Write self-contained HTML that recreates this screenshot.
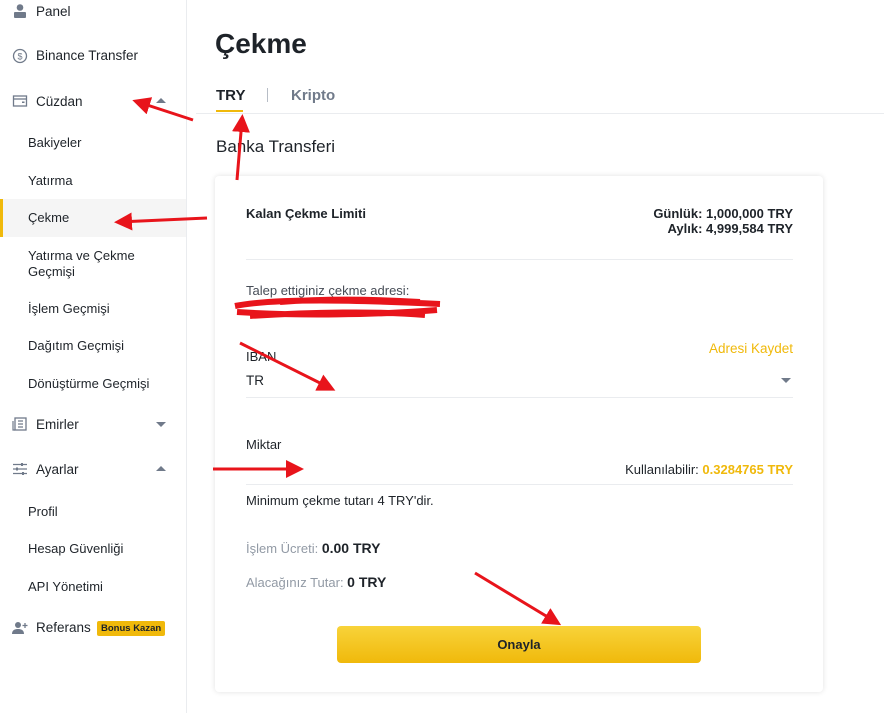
<!DOCTYPE html>
<html><head><meta charset="utf-8"><style>
*{margin:0;padding:0;box-sizing:border-box}
body{width:884px;height:713px;overflow:hidden;background:#fff;font-family:"Liberation Sans",sans-serif;color:#1e2329;position:relative}
.sb{position:absolute;left:0;top:0;width:187px;height:713px;border-right:1px solid #eaecef}
.it{position:absolute;left:0;width:186px;font-size:13.5px;color:#1e2329}
.it.top{left:36px}
.sub{position:absolute;left:28px;font-size:13px;color:#1e2329}
.ic{position:absolute;left:12px;width:16px;height:16px;color:#707a8a}
.car{position:absolute;left:156px;width:0;height:0;border-left:5px solid transparent;border-right:5px solid transparent}
.up{border-bottom:5px solid #707a8a}.dn{border-top:5px solid #707a8a}
.t{position:absolute;white-space:nowrap}
.card{position:absolute;left:215px;top:176px;width:608px;height:516px;border-radius:4px;box-shadow:0 0 6px rgba(0,0,0,.12);background:#fff}
.hr{position:absolute;height:1px;background:#eaecef}
</style></head><body>
<div class="sb">
<svg class="ic" style="top:3px" viewBox="0 0 16 16"><circle cx="8" cy="4.5" r="3.3" fill="#707a8a"/><rect x="2" y="9" width="12" height="6" rx="1" fill="#707a8a"/></svg>
<div class="t it top" style="top:4px">Panel</div>
<svg class="ic" style="top:48px" viewBox="0 0 16 16"><circle cx="8" cy="8" r="6.5" fill="none" stroke="#707a8a" stroke-width="1.3"/><text x="8" y="11.5" font-size="9" text-anchor="middle" fill="#707a8a" font-family="Liberation Sans">$</text></svg>
<div class="t it top" style="top:48px">Binance Transfer</div>
<svg class="ic" style="top:93px" viewBox="0 0 16 16"><rect x="1.5" y="3" width="13" height="10" fill="none" stroke="#707a8a" stroke-width="1.3"/><line x1="1.5" y1="6" x2="14.5" y2="6" stroke="#707a8a" stroke-width="1.3"/><rect x="10" y="8.5" width="2.5" height="1.5" fill="#707a8a"/></svg>
<div class="t it top" style="top:94px">Cüzdan</div><div class="car up" style="top:98px"></div>
<div class="t sub" style="top:135px">Bakiyeler</div>
<div class="t sub" style="top:173px">Yatırma</div>
<div style="position:absolute;left:0;top:199px;width:186px;height:38px;background:#f5f5f5;border-left:3px solid #f0b90b"></div>
<div class="t sub" style="top:210px">Çekme</div>
<div class="t sub" style="top:248px;line-height:16px">Yatırma ve Çekme<br>Geçmişi</div>
<div class="t sub" style="top:301px">İşlem Geçmişi</div>
<div class="t sub" style="top:338px">Dağıtım Geçmişi</div>
<div class="t sub" style="top:376px">Dönüştürme Geçmişi</div>
<svg class="ic" style="top:416px" viewBox="0 0 16 16"><rect x="3" y="2" width="11" height="12" fill="none" stroke="#707a8a" stroke-width="1.3"/><path d="M1 5v9h2M6 5h5M6 8h5M6 11h5" stroke="#707a8a" stroke-width="1.2" fill="none"/></svg>
<div class="t it top" style="top:417px">Emirler</div><div class="car dn" style="top:422px"></div>
<svg class="ic" style="top:461px" viewBox="0 0 16 16"><path d="M1 3.5h14M1 8h14M1 12.5h14" stroke="#707a8a" stroke-width="1.3"/><rect x="9" y="2" width="2" height="3" fill="#707a8a"/><rect x="4" y="6.5" width="2" height="3" fill="#707a8a"/><rect x="10" y="11" width="2" height="3" fill="#707a8a"/></svg>
<div class="t it top" style="top:462px">Ayarlar</div><div class="car up" style="top:466px"></div>
<div class="t sub" style="top:504px">Profil</div>
<div class="t sub" style="top:541px">Hesap Güvenliği</div>
<div class="t sub" style="top:579px">API Yönetimi</div>
<svg class="ic" style="top:620px" viewBox="0 0 16 16"><circle cx="6" cy="5" r="3" fill="#707a8a"/><path d="M0 14c0-4 3-5 6-5s6 1 6 5z" fill="#707a8a"/><path d="M13 3v5M10.5 5.5h5" stroke="#707a8a" stroke-width="1.3"/></svg>
<div class="t it top" style="top:620px">Referans</div>
<div class="t" style="left:97px;top:621px;background:#f0b90b;font-size:9.5px;font-weight:bold;padding:2px 4px;border-radius:2px">Bonus Kazan</div>
</div>
<div class="t" style="left:215px;top:28px;font-size:28px;font-weight:bold">Çekme</div>
<div class="t" style="left:216px;top:87px;font-size:15px;font-weight:bold">TRY</div>
<div style="position:absolute;left:216px;top:110px;width:27px;height:2px;background:#f0b90b"></div>
<div style="position:absolute;left:267px;top:88px;width:1px;height:14px;background:#b7bdc6"></div>
<div class="t" style="left:291px;top:87px;font-size:15px;font-weight:bold;color:#707a8a">Kripto</div>
<div class="hr" style="left:196px;top:113px;width:688px"></div>
<div class="t" style="left:216px;top:137px;font-size:17px">Banka Transferi</div>
<div class="card">
<div class="t" style="left:31px;top:30px;font-size:13px;font-weight:bold">Kalan Çekme Limiti</div>
<div class="t" style="right:30px;top:30px;font-size:13px;font-weight:bold;text-align:right;line-height:15px">Günlük: 1,000,000 TRY<br>Aylık: 4,999,584 TRY</div>
<div class="hr" style="left:31px;top:83px;width:547px"></div>
<div class="t" style="left:31px;top:107px;font-size:13px;color:#474d57">Talep ettiginiz çekme adresi:</div>
<div class="t" style="right:30px;top:165px;font-size:13.5px;color:#f0b90b">Adresi Kaydet</div>
<div class="t" style="left:31px;top:173px;font-size:13px">IBAN</div>
<div class="t" style="left:31px;top:197px;font-size:13.5px">TR</div>
<div class="car dn" style="left:566px;top:202px"></div>
<div class="hr" style="left:31px;top:221px;width:547px"></div>
<div class="t" style="left:31px;top:261px;font-size:13px">Miktar</div>
<div class="t" style="right:30px;top:286px;font-size:13px">Kullanılabilir: <span style="color:#f0b90b;font-weight:bold">0.3284765 TRY</span></div>
<div class="hr" style="left:31px;top:308px;width:547px"></div>
<div class="t" style="left:31px;top:317px;font-size:13px">Minimum çekme tutarı 4 TRY'dir.</div>
<div class="t" style="left:31px;top:364px;font-size:13px;color:#929aa5">İşlem Ücreti: <b style="color:#1e2329;font-size:14px">0.00 TRY</b></div>
<div class="t" style="left:31px;top:398px;font-size:13px;color:#929aa5">Alacağınız Tutar: <b style="color:#1e2329;font-size:14px">0 TRY</b></div>
<div style="position:absolute;left:122px;top:450px;width:364px;height:37px;border-radius:4px;background:linear-gradient(#f8d33a,#f0b90b);font-size:13px;font-weight:bold;text-align:center;line-height:37px">Onayla</div>
</div>
<svg style="position:absolute;left:0;top:0" width="884" height="713">
<defs><marker id="a" markerWidth="6" markerHeight="6" refX="4" refY="3" orient="auto"><path d="M0 0L6 3L0 6z" fill="#e8141b"/></marker></defs>
<g stroke="#e8141b" stroke-width="3" fill="none" marker-end="url(#a)">
<line x1="193" y1="120" x2="138" y2="102"/>
<line x1="237" y1="180" x2="242" y2="120"/>
<line x1="207" y1="218" x2="120" y2="222"/>
<line x1="240" y1="343" x2="330" y2="388"/>
<line x1="213" y1="469" x2="298" y2="469"/>
<line x1="475" y1="573" x2="556" y2="622"/>
</g>
<path d="M235 306c40-8 120-6 205-2M237 312c60 4 140 3 200-2M250 316c60-4 130-5 175-1M280 302c40-3 90-3 140 0" stroke="#e8141b" stroke-width="6" fill="none"/>
</svg>
</body></html>
